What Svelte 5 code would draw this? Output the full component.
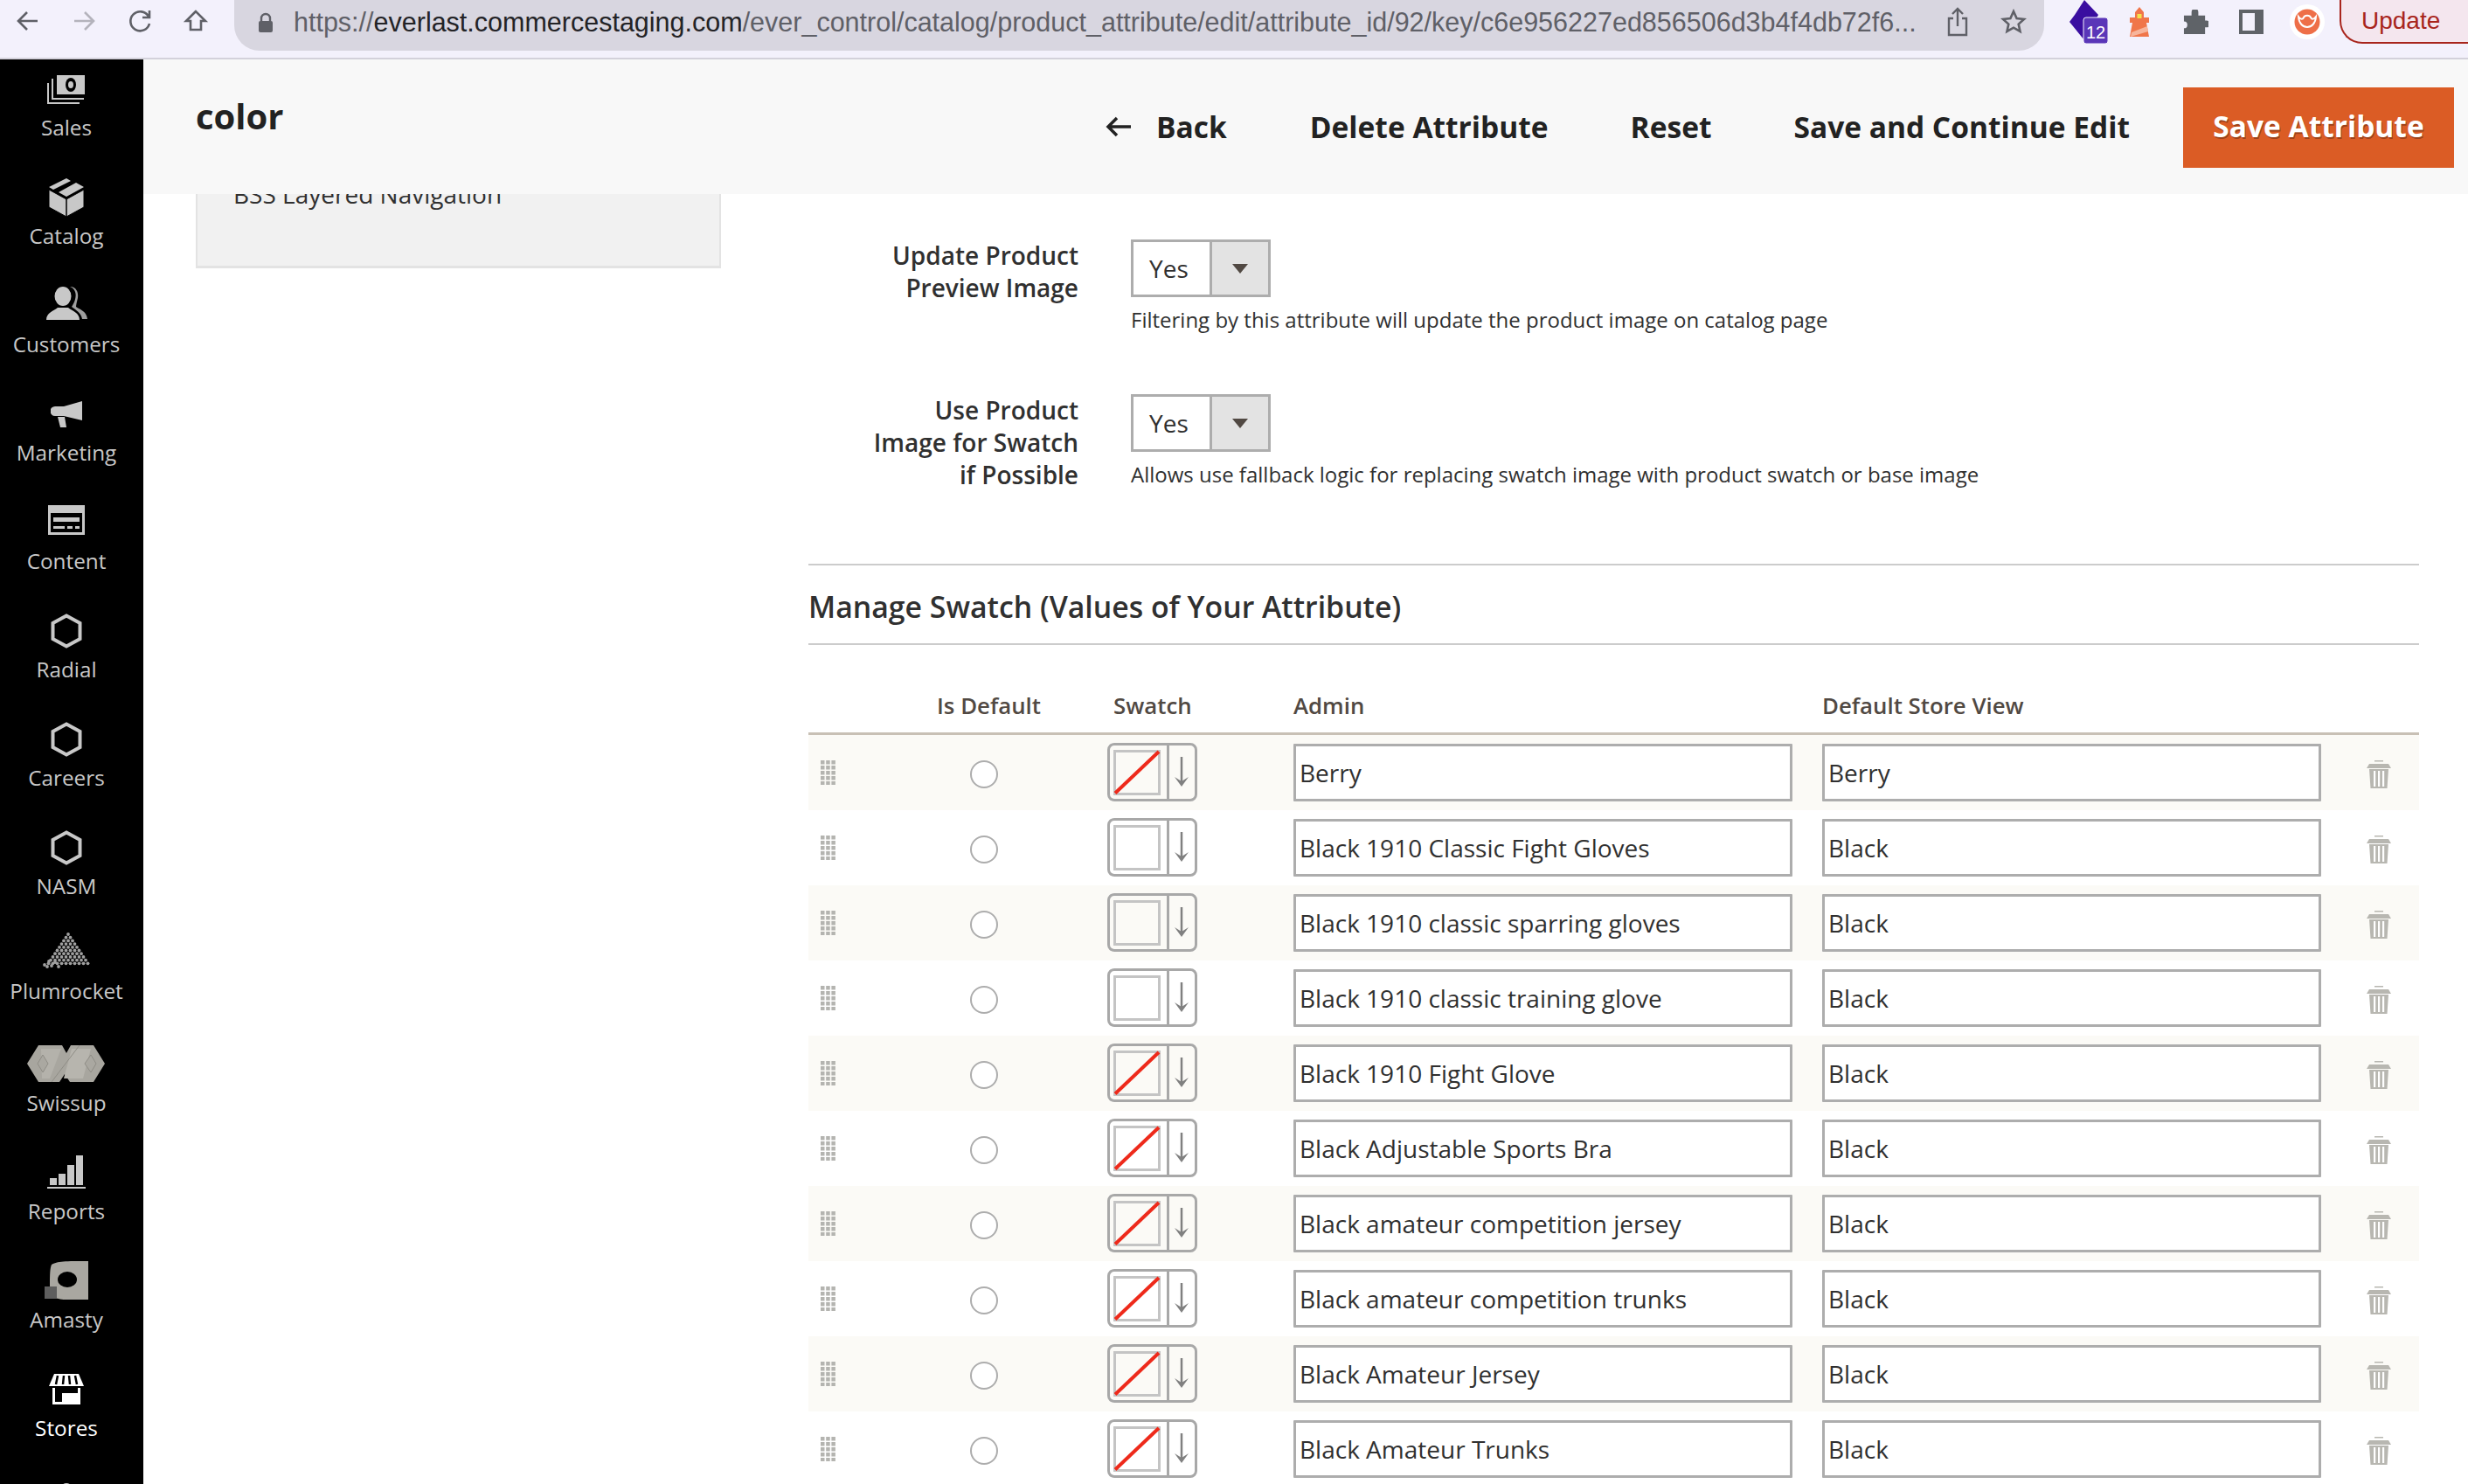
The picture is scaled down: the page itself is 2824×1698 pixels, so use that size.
<script>
  const rows = [
    ['Berry','Berry',true],
    ['Black 1910 Classic Fight Gloves','Black',false],
    ['Black 1910 classic sparring gloves','Black',false],
    ['Black 1910 classic training glove','Black',false],
    ['Black 1910 Fight Glove','Black',true],
    ['Black Adjustable Sports Bra','Black',true],
    ['Black amateur competition jersey','Black',true],
    ['Black amateur competition trunks','Black',true],
    ['Black Amateur Jersey','Black',true],
    ['Black Amateur Trunks','Black',true]
  ];
  const hex = ['Radial','Careers','NASM'];
  const dots = [];
  for (let r = 0; r < 10; r++) for (let c = 0; c <= r; c++) {
    dots.push([30 + (c - r / 2) * 5, 2 + r * 3.7]);
  }
  for (const p of [[3,37],[8,33],[11,38],[15,34],[19,39],[6,39]]) dots.push(p);
</script>

<div class="page">
  <header class="chrome">
    <div class="navs">
      <svg width="30" height="30" viewBox="0 0 30 30"><path d="M26 15H5M14 5 4 15l10 10" class="nav"/></svg>
      <svg width="30" height="30" viewBox="0 0 30 30"><path d="M4 15h21M16 5l10 10-10 10" class="nav off"/></svg>
      <svg width="30" height="30" viewBox="0 0 30 30"><path d="M25 10a11 11 0 1 0 1 8M26 3v8h-8" class="nav"/></svg>
      <svg width="30" height="30" viewBox="0 0 30 30"><path d="M15 4 4 15h5v10h12V15h5z" class="nav"/></svg>
    </div>
    <div class="url">
      <svg class="lock" width="18" height="24" viewBox="0 0 18 24"><path d="M4 10V7a5 5 0 0 1 10 0v3" fill="none" stroke="#5f6067" stroke-width="2.400"/><rect x="1" y="10" width="16" height="13" rx="2" fill="#5f6067"/></svg>
      <div class="urltext">https://<b>everlast.commercestaging.com</b>/ever_control/catalog/product_attribute/edit/attribute_id/92/key/c6e956227ed856506d3b4f4db72f6...</div>
      <svg class="share" width="26" height="34" viewBox="0 0 26 34"><path d="M8 13H3v19h20V13h-5M13 22V3M7 8l6-6 6 6" fill="none" stroke="#5f6067" stroke-width="2.400"/></svg>
      <svg class="star" width="30" height="30" viewBox="0 0 30 30"><path d="m15 3 3.600 8 8.400.9-6.300 5.700 1.800 8.400L15 21.700 7.500 26l1.800-8.400L3 11.900l8.400-.9z" fill="none" stroke="#5f6067" stroke-width="2.600"/></svg>
    </div>
    <div class="exts">
      <div class="ext e1">
        <svg width="44" height="50" viewBox="0 0 44 50"><path d="M17 0 33 17 28 26 33 30 17 46 0 25 6 17z" fill="#3a0ea0"/><rect x="16" y="20" width="28" height="30" rx="3" fill="#5a36b8" stroke="#f3f1fc" stroke-width="1"/></svg>
        <span class="badge">12</span>
      </div>
      <svg class="ext e2" width="24" height="34" viewBox="0 0 24 34"><path d="M12 0l5 6v6h6v6h-3l3 16H1l3-16H1v-6h6V6z" fill="#f0764a"/><rect x="9.500" y="8" width="5" height="5" fill="#f4e34a"/><path d="M3 29l18-7 1 6-20 6z" fill="#f7b59b"/></svg>
      <svg class="ext e3" width="29" height="29" viewBox="0 0 30 30"><path d="M10 3a4 4 0 0 1 8 0v4h8v6h2a4 4 0 0 1 0 8h-2v8H1v-7a4 4 0 0 0 0-8V7h9z" fill="#5f6368"/></svg>
      <svg class="ext e4" width="28" height="28" viewBox="0 0 28 28"><rect x="2" y="2" width="24" height="24" fill="none" stroke="#5f6368" stroke-width="4"/><rect x="18" y="2" width="8" height="24" fill="#5f6368"/></svg>
      <svg class="ext e5" width="40" height="40" viewBox="0 0 40 40"><circle cx="20" cy="20" r="20" fill="#fff"/><circle cx="20" cy="20" r="14.500" fill="#ee6f48"/><path d="M10 14c1 16 19 16 20 0-3 4-5 3-6 1-1-3-7-3-8 0-1 2-3 3-6-1z" fill="none" stroke="#fff" stroke-width="2"/></svg>
      <div class="update">Update</div>
    </div>
  </header>

  <div class="body">
    <nav class="side">
      <div class="item">
        <div class="ic"><svg width="44" height="34" viewBox="0 0 44 34"><rect x="11" y="1" width="32" height="22" fill="#c8c8c8"/><ellipse cx="27" cy="12" rx="6" ry="8" fill="#000"/><ellipse cx="27" cy="12" rx="3" ry="4" fill="#c8c8c8"/><path d="M6 5v23h36M1 10v23h36" fill="none" stroke="#c8c8c8" stroke-width="2"/></svg></div>
        <span>Sales</span>
      </div>
      <div class="item">
        <div class="ic"><svg width="42" height="44" viewBox="0 0 42 44"><path d="M21 44V24L1 13v20zM21 44V24l20-11v20z" fill="#c8c8c8" stroke="#000" stroke-width="1"/><path d="M1 10 21 0l5 3-20 10zM12 16 32 5l9 5-20 11z" fill="#c8c8c8"/></svg></div>
        <span>Catalog</span>
      </div>
      <div class="item up">
        <div class="ic"><svg width="47" height="38" viewBox="0 0 47 38"><path d="M27 0c7 0 10 6 9 13-1 4-2 8-2 10 3 3 12 4 13 14h-6c-1-7-8-11-12-14 3-4 6-12 4-17-1-3-3-5-6-6z" fill="#9f9f9f"/><ellipse cx="19" cy="11" rx="9.500" ry="11" fill="#c8c8c8"/><path d="M0 38c0-8 8-10 13-14h12c5 4 13 6 13 14z" fill="#c8c8c8"/></svg></div>
        <span>Customers</span>
      </div>
      <div class="item">
        <div class="ic"><svg width="36" height="30" viewBox="0 0 36 30"><path d="M36 0v22L15 17H5a5 5 0 0 1 0-11h10zM8 18h8l2 12h-7z" fill="#c8c8c8"/></svg></div>
        <span>Marketing</span>
      </div>
      <div class="item up">
        <div class="ic"><svg width="42" height="34" viewBox="0 0 42 34"><path d="M0 0h42v34H0z" fill="#c8c8c8"/><path d="M3 9h36v22H3z" fill="#000"/><path d="M6 14h30v5H6zM6 24h13v3H6zM22 24h6v3h-6zM31 24h5v3h-5z" fill="#c8c8c8"/></svg></div>
        <span>Content</span>
      </div>
      {#each hex as h}
        <div class="item">
          <div class="ic"><svg width="36" height="40" viewBox="0 0 36 40"><path d="M18 2.500 33.500 11v18L18 37.500 2.500 29V11z" fill="none" stroke="#c8c8c8" stroke-width="4"/></svg></div>
          <span>{h}</span>
        </div>
      {/each}
      <div class="item plum">
        <div class="ic"><svg width="56" height="42" viewBox="0 0 56 42">{#each dots as d}<circle cx={d[0]} cy={d[1]} r="1.900" fill="#a0a0a0"/>{/each}</svg></div>
        <span>Plumrocket</span>
      </div>
      <div class="item up2">
        <div class="ic"><svg width="90" height="42" viewBox="0 0 90 42"><path d="M13 0H40L45 9 50 0H76L89 21 76 42H49L43 33 37 42H13L0 21z" fill="#a8a69f"/><path d="M16 4H39L26 38H17z" fill="#b4b2ab"/><path d="M51 4H73L64 38H42z" fill="#b7b5ae"/><path d="M12 21l6-10 6 10-6 10zM66 21l7-10 6 10-6 10z" fill="#aaa8a1" stroke="#8f8d86" stroke-width="1"/><path d="M28 42 60 0" stroke="#8f8d86" stroke-width="1"/></svg></div>
        <span>Swissup</span>
      </div>
      <div class="item up2">
        <div class="ic"><svg width="44" height="38" viewBox="0 0 44 38"><path d="M3 26h8v8H3zM13 21h8v13h-8zM23 11h8v23h-8zM33 0h8v34h-8z" fill="#c8c8c8"/><path d="M0 36h44v2H0z" fill="#c8c8c8"/></svg></div>
        <span>Reports</span>
      </div>
      <div class="item up2">
        <div class="ic"><svg width="50" height="44" viewBox="0 0 50 44"><path d="M8 4C14 0 24 0 50 0v44H26c-12 0-20-2-20-16 0-10 0-20 2-24z" fill="#a9a7a1"/><ellipse cx="26" cy="21" rx="11" ry="9" fill="#000"/><rect x="0" y="29" width="14" height="14" fill="#5e5e5e"/></svg></div>
        <span>Amasty</span>
      </div>
      <div class="item on">
        <div class="ic"><svg width="40" height="36" viewBox="0 0 40 36"><path d="M6 0h28l6 14H0z" fill="#fff"/><path d="M10 2 8 12M17 2l-1 10M23 2l1 10M30 2l2 10" stroke="#000" stroke-width="2.500"/><path d="M4 16v19h32V16h-3v6H15v10H7V16z" fill="#fff"/></svg></div>
        <span>Stores</span>
      </div>
      <div class="item">
        <div class="ic"><svg width="34" height="36" viewBox="0 0 34 36"><circle cx="17" cy="8" r="7" fill="#c8c8c8"/></svg></div>
      </div>
    </nav>

    <main class="main">
      <div class="top">
        <h1>color</h1>
        <div class="actions">
          <button class="act back"><svg width="30" height="24" viewBox="0 0 30 24"><path d="M29 12H4M13 2 3 12l10 10" fill="none" stroke="#222" stroke-width="3.500"/></svg>Back</button>
          <button class="act">Delete Attribute</button>
          <button class="act">Reset</button>
          <button class="act">Save and Continue Edit</button>
          <button class="save">Save Attribute</button>
        </div>
      </div>
      <div class="content">
        <aside class="card"><div class="cardtext">BSS Layered Navigation</div></aside>
        <section class="form">
          <div class="frow">
            <div class="flabel">Update Product<br>Preview Image</div>
            <div class="fctl">
              <div class="select"><span class="val">Yes</span><span class="arrow"><i></i></span></div>
              <div class="note">Filtering by this attribute will update the product image on catalog page</div>
            </div>
          </div>
          <div class="frow two">
            <div class="flabel">Use Product<br>Image for Swatch<br>if Possible</div>
            <div class="fctl">
              <div class="select"><span class="val">Yes</span><span class="arrow"><i></i></span></div>
              <div class="note">Allows use fallback logic for replacing swatch image with product swatch or base image</div>
            </div>
          </div>
          <h2 class="title">Manage Swatch (Values of Your Attribute)</h2>
          <div class="grid head">
            <div></div>
            <div class="h-def">Is Default</div>
            <div class="h-sw">Swatch</div>
            <div>Admin</div>
            <div>Default Store View</div>
            <div></div>
          </div>
          {#each rows as r, i}
            <div class="grid row" class:alt={i % 2 === 0}>
              <svg class="drag" width="17" height="28" viewBox="0 0 17 28">
                {#each [0,1,2,3,4] as y}{#each [0,1,2] as x}<rect x={x*6.2} y={y*6} width="4.500" height="4.500" fill="#b4b4b0"/>{/each}{/each}
              </svg>
              <div class="radiocell"><span class="radio"></span></div>
              <div class="swcell">
                <div class="swatch">
                  <div class="sq">
                    {#if r[2]}<svg width="54" height="52" viewBox="0 0 54 52"><path d="M2 49.500 52 2" stroke="#ee2a1b" stroke-width="4"/></svg>{/if}
                  </div>
                  <div class="down"><svg width="16" height="34" viewBox="0 0 16 34"><path d="M8 0v30" fill="none" stroke="#808080" stroke-width="2.500"/><path d="M0 23l8 5 8-5-8 11z" fill="#808080"/></svg></div>
                </div>
              </div>
              <div class="field">{r[0]}</div>
              <div class="field">{r[1]}</div>
              <svg class="trash" width="28" height="32" viewBox="0 0 28 32"><path d="M9 0h10v1.500H9zM3 4h22l3 5H0zM3 10h22l-1.500 22h-19z" fill="#b8b7b1"/><path d="M8 12h2.200v18H8zM13 12h2.200v18H13zM18 12h2.200v18H18z" fill="#fff"/></svg>
            </div>
          {/each}
        </section>
      </div>
    </main>
  </div>
</div>

<style>
  :global(body) { margin: 0; background: #fff; }
  .page { width: 2824px; height: 1698px; overflow: hidden; font-family: "Open Sans", sans-serif; color: #303030; display: flex; flex-direction: column; }
  .chrome { height: 66px; flex: none; box-sizing: content-box; background: #f3f1fc; border-bottom: 2px solid #d3d1db; display: flex; align-items: flex-start; padding-left: 17px; }
  .navs { display: flex; gap: 34px; padding-top: 9px; width: 251px; flex: none; }
  .nav { fill: none; stroke: #5f6067; stroke-width: 2.600; }
  .off { stroke: #b4b3bc; }
  .url { width: 2071px; height: 58px; flex: none; background: #d8d6e0; border-radius: 0 0 29px 29px; display: flex; align-items: center; padding-left: 27px; box-sizing: border-box; }
  .lock { margin-top: -6px; }
  .urltext { margin: -9px 0 0 23px; width: 1866px; flex: none; font: 30.500px/52px "Liberation Sans", sans-serif; color: #5f6067; white-space: nowrap; overflow: hidden; }
  .urltext b { font-weight: 400; color: #232326; }
  .share { margin: -8px 0 0 25px; }
  .star { margin: -8px 0 0 36px; }
  .exts { display: flex; align-items: center; height: 50px; flex: none; padding-left: 29px; }
  .ext { position: relative; flex: none; }
  .e1 { width: 44px; height: 50px; margin-right: 24px; }
  .e2 { margin-right: 38px; }
  .e3 { margin-right: 35px; }
  .e4 { margin-right: 30px; }
  .e5 { margin-right: 17px; }
  .badge { position: absolute; left: 16px; top: 24px; width: 28px; text-align: center; font: 20px/26px "Liberation Sans", sans-serif; color: #fff; }
  .update { width: 180px; height: 51px; border: 2px solid #a8251c; border-top: 0; border-right: 0; border-radius: 0 0 0 26px; box-sizing: border-box; margin-top: -1px; font: 28px/50px "Liberation Sans", sans-serif; color: #a8251c; padding-left: 23px; background: #f4e6ee; flex: none; }

  .body { flex: 1; display: flex; min-height: 0; }
  .side { width: 164px; box-sizing: border-box; padding-right: 12px; flex: none; background: #000; overflow: hidden; }
  .item { height: 124px; display: flex; flex-direction: column; align-items: center; color: #c8c8c8; font-size: 24.300px; line-height: 20px; }
  .item.on { color: #fff; }
  .ic { height: 68px; display: flex; align-items: center; justify-content: center; flex: none; }
  .item.up svg { margin-bottom: 7px; }
  .item.up2 svg { margin-bottom: 2px; }
  .item.plum svg { margin-bottom: 12px; }
  .item.plum span { margin-top: -4px; }
  .item span { white-space: nowrap; }

  .main { flex: 1; min-width: 0; display: flex; flex-direction: column; }
  .top { height: 154px; flex: none; background: #f8f8f8; display: flex; justify-content: space-between; padding: 0 16px 0 60px; box-sizing: border-box; }
  h1 { margin: 0; font-size: 40px; font-weight: 700; line-height: 44px; color: #222; padding-top: 43px; }
  .actions { display: flex; align-items: flex-start; padding-top: 32px; }
  .act { background: none; border: 0; padding: 0 0 3px; margin-right: 95px; height: 92px; font: 700 33.500px/90px "Open Sans", sans-serif; color: #222; display: flex; align-items: center; white-space: nowrap; }
  .act:nth-child(2) { margin-right: 94px; }
  .act:nth-child(3) { margin-right: 94px; }
  .act:nth-child(4) { margin-right: 61px; }
  .back svg { margin-right: 28px; }
  .save { width: 310px; height: 92px; border: 0; padding: 0 0 3px; background: #db5c25; color: #fff; font: 700 33.500px/87px "Open Sans", sans-serif; text-shadow: 1px 2px 0 rgba(0,0,0,.3); white-space: nowrap; }

  .content { flex: 1; min-height: 0; overflow: hidden; display: flex; padding: 0 56px 0 60px; gap: 100px; }
  .card { width: 601px; height: 85px; box-sizing: border-box; flex: none; background: #f1f1f1; border: solid #e3e3e3; border-width: 0 2px 3px 2px; padding-left: 41px; overflow: hidden; }
  .cardtext { font-size: 28px; line-height: 38px; margin-top: -19px; color: #303030; }
  .form { flex: 1; min-width: 0; padding-top: 52px; }
  .frow { display: flex; gap: 60px; min-height: 106px; }
  .frow.two { margin-top: 71px; }
  .flabel { width: 309px; flex: none; text-align: right; font-size: 28px; line-height: 37px; font-weight: 600; color: #303030; }
  .select { width: 160px; height: 66px; box-sizing: border-box; border: 3px solid #adadad; display: flex; }
  .val { width: 87px; flex: none; font-size: 28px; line-height: 60px; padding-left: 18px; box-sizing: border-box; }
  .arrow { flex: 1; background: #e3e3e3; border-left: 3px solid #adadad; display: flex; align-items: center; justify-content: center; }
  .arrow i { width: 0; height: 0; border-left: 9px solid transparent; border-right: 9px solid transparent; border-top: 11px solid #514943; }
  .note { font-size: 24px; line-height: 28px; margin-top: 12px; white-space: nowrap; }
  .title { margin: 83px 0 0; height: 93px; box-sizing: border-box; border-top: 2px solid #cccccc; border-bottom: 2px solid #cccccc; font-size: 33.800px; font-weight: 600; line-height: 88px; padding-top: 3px; color: #303030; }
  .grid { display: grid; grid-template-columns: 120px 162px 273px 605px 605px 1fr; align-items: center; }
  .head { height: 103px; box-sizing: border-box; border-bottom: 3px solid #c8c0b5; font-size: 25.800px; font-weight: 600; color: #514943; padding-top: 52px; line-height: 34px; align-items: start; }
  .h-def { margin-left: 27px; white-space: nowrap; }
  .h-sw { margin-left: 67px; }
  .row { height: 86px; }
  .row.alt { background: #fbfaf6; }
  .drag { margin-left: 14px; }
  .radiocell { display: flex; justify-content: center; padding-top: 3px; }
  .radio { width: 32px; height: 32px; box-sizing: border-box; border: 2px solid #adadad; border-radius: 50%; background: #fff; }
  .swcell { padding: 0 0 2px 60px; }
  .swatch { width: 103px; height: 67px; box-sizing: border-box; border: 3px solid #a8a8a8; border-radius: 8px; display: flex; }
  .sq { width: 54px; height: 52px; box-sizing: border-box; border: 3px solid #c4c4c4; margin: 5px 0 0 4px; flex: none; position: relative; }
  .sq svg { position: absolute; left: -3px; top: -3px; }
  .down { margin-left: 7px; flex: 1; border-left: 3px solid #a8a8a8; display: flex; align-items: center; justify-content: center; padding-right: 2px; }
  .field { width: 571px; height: 66px; box-sizing: border-box; border: 3px solid #adadad; border-radius: 1px; background: #fff; font-size: 28px; line-height: 60px; padding-left: 4px; white-space: nowrap; }
  .trash { margin: 3px 0 0 18px; }
</style>
